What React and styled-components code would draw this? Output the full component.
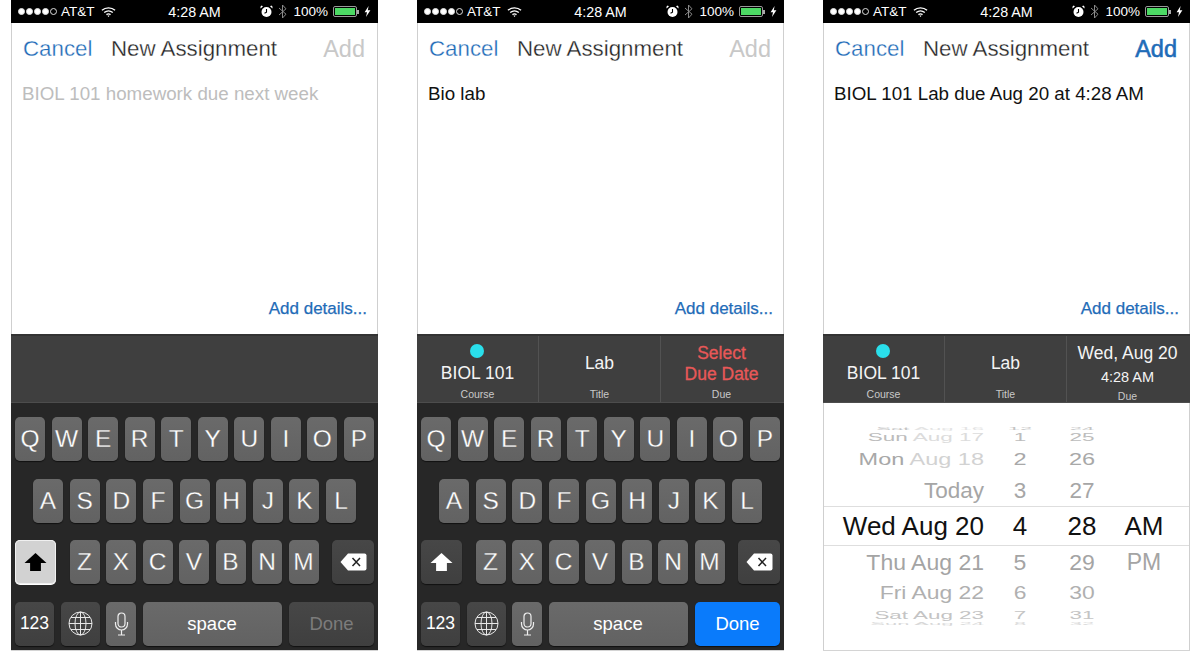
import React from 'react';
import styled, { createGlobalStyle } from 'styled-components';

const BLUE = '#1f6cb8';
const SANS = '"Liberation Sans", Arial, sans-serif';

const GlobalStyle = createGlobalStyle`
  html, body {
    margin: 0;
    background: #fff;
    font-family: ${SANS};
  }
`;

const Page = styled.div`
  display: flex;
  gap: 39px;
  padding-left: 11px;
  width: 1200px;
  height: 652px;
  box-sizing: border-box;
  overflow: hidden;
`;

const Phone = styled.div`
  width: 367px;
  height: 651px;
  display: flex;
  flex-direction: column;
  border-bottom: 1px solid #d4d4d4;
  box-sizing: border-box;
`;

const StatusBar = styled.div`
  height: 23px;
  flex: none;
  background: #000;
  color: #fff;
  display: grid;
  grid-template-columns: 1fr auto 1fr;
  align-items: center;
  padding: 0 7px;
  font-size: 13.5px;
`;

const StatusSide = styled.div`
  display: flex;
  align-items: center;
  justify-content: ${p => (p.$right ? 'flex-end' : 'flex-start')};
`;

const Time = styled.span`
  font-size: 14.3px;
`;

const Dots = styled.span`
  display: flex;
  gap: 1px;
  margin-right: 4px;
`;

const Dot = styled.i`
  width: 7px;
  height: 7px;
  box-sizing: border-box;
  border-radius: 50%;
  background: ${p => (p.$empty ? 'transparent' : '#fff')};
  border: 1px solid #ddd;
`;

const Carrier = styled.span`
  margin-right: 6px;
`;

const Percent = styled.span`
  margin: 0 5px 0 6px;
`;

const Battery = styled.span`
  width: 24px;
  height: 11px;
  border: 1px solid #999;
  border-radius: 2px;
  padding: 1px;
  box-sizing: border-box;
  position: relative;
  display: flex;
  margin-right: 7px;
  &::after {
    content: '';
    position: absolute;
    right: -3px;
    top: 2.5px;
    width: 2px;
    height: 4px;
    background: #aaa;
  }
`;

const BatteryFill = styled.span`
  flex: 1;
  background: #4cd964;
`;

const Sheet = styled.div`
  height: 311px;
  flex: none;
  box-sizing: border-box;
  background: #fff;
  border: solid #cfcfcf;
  border-width: 0 1px;
  display: flex;
  flex-direction: column;
`;

const Nav = styled.div`
  height: 52px;
  flex: none;
  display: flex;
  align-items: center;
  padding: 0 12px 0 11px;
  font-size: 22.3px;
  -webkit-text-stroke: 0.3px #fff;
`;

const Cancel = styled.span`
  color: ${BLUE};
  width: 88px;
`;

const Title = styled.span`
  color: #222;
  flex: 1;
`;

const AddButton = styled.span`
  font-size: 23.5px;
  color: ${p => (p.$ready ? BLUE : '#c8c8c8')};
  -webkit-text-stroke: ${p => (p.$ready ? `0.6px ${BLUE}` : '0')};
`;

const Message = styled.div`
  padding: 8px 10px 0;
  font-size: 18.75px;
  line-height: 22px;
  color: ${p => (p.$placeholder ? '#bdbdbd' : '#111')};
`;

const Details = styled.div`
  margin-top: auto;
  padding: 0 10px 15px 0;
  text-align: right;
  font-size: 17px;
  line-height: 20px;
  color: ${BLUE};
  -webkit-text-stroke: 0.25px ${BLUE};
`;

const Toolbar = styled.div`
  height: 69px;
  flex: none;
  box-sizing: border-box;
  background: #3f3f3f;
  border-top: 2px solid #333;
  border-bottom: 1px solid #4d4d4d;
  display: flex;
`;

const Cell = styled.div`
  flex: 1;
  min-width: 0;
  box-sizing: border-box;
  display: flex;
  flex-direction: column;
  align-items: center;
  color: #fff;
  border-right: 1px solid #525252;
  &:last-child {
    border-right: 0;
    padding-right: 2px;
  }
`;

const CellMain = styled.div`
  flex: 1;
  display: flex;
  flex-direction: column;
  align-items: center;
  justify-content: center;
  padding-top: ${p => p.$top || 0}px;
`;

const CourseDot = styled.span`
  width: 14px;
  height: 14px;
  border-radius: 50%;
  background: #2adfeb;
  margin-bottom: 5px;
`;

const CellValue = styled.span`
  font-size: ${p => p.$size || 17.5}px;
  line-height: ${p => p.$line || 21}px;
  text-align: center;
  color: ${p => (p.$alert ? '#e85858' : '#f4f4f4')};
  -webkit-text-stroke: ${p => (p.$alert ? '0.3px #e85858' : '0')};
`;

const CellLabel = styled.span`
  font-size: 10.5px;
  line-height: 12px;
  color: #c9c9c9;
  padding-bottom: 2px;
`;

const Keyboard = styled.div`
  flex: 1;
  background: #272727;
  padding: 14px 4px 4px;
  display: flex;
  flex-direction: column;
  justify-content: space-between;
`;

const KeyRow = styled.div`
  display: flex;
  justify-content: space-between;
  padding: 0 ${p => p.$inset || 0}px;
`;

const KeyGroup = styled.div`
  display: flex;
  gap: ${p => p.$gap || 6.5}px;
`;

const KEY_COLORS = {
  letter: 'linear-gradient(#6a6a6a, #626262)',
  dark: 'linear-gradient(#474747, #3f3f3f)',
  light: '#d2d2d2',
  blue: '#0a7bfb',
};

const Key = styled.div`
  width: ${p => p.$width || 30}px;
  height: 44px;
  flex: none;
  display: flex;
  align-items: center;
  justify-content: center;
  border-radius: 5px;
  background: ${p => KEY_COLORS[p.$tone || 'letter']};
  box-shadow: ${p => (p.$tone === 'light' ? '0 1px 0 #fff, inset 0 0 0 1px #f0f0f0' : '0 1px 1px #111')};
  color: ${p => p.$color || '#fff'};
  font-size: ${p => p.$size || 24.5}px;
  -webkit-text-stroke: ${p => (p.$size ? '0' : '0.3px #666')};
`;

const Picker = styled.div`
  flex: 1;
  background: #fff;
  border: solid #cfcfcf;
  border-width: 0 1px;
  padding-top: 24px;
`;

const WheelRow = styled.div`
  height: ${p => p.$height}px;
  line-height: ${p => p.$height}px;
  display: grid;
  grid-template-columns: 160px 72px 52px 72px;
  align-items: center;
  font-size: ${p => p.$size}px;
  color: ${p => p.$color};
  ${p => p.$selected && `
    border: solid #dedede;
    border-width: 1px 0;
    box-sizing: border-box;
    line-height: 38px;
  `}
`;

const WheelText = styled.span`
  display: block;
  white-space: nowrap;
  transform: scaleY(${p => p.$squash || 1});
  text-align: ${p => (p.$date ? 'right' : 'center')};
`;

const FadedPart = styled.span`
  color: ${p => p.$color};
`;

const Wifi = () => (
  <svg width="15" height="12" viewBox="0 0 16 12" fill="none" stroke="#fff" strokeWidth="1.4">
    <path d="M1 4.2C5 .6 11 .6 15 4.2" />
    <path d="M3.4 6.6c2.7-2.2 6.5-2.2 9.2 0" />
    <path d="M5.8 8.8c1.3-1 3.1-1 4.4 0" />
    <path d="M8 11.4 6.900 10.100c.7-.4 1.5-.4 2.2 0z" fill="#fff" stroke="none" />
  </svg>
);

const Alarm = () => (
  <svg width="13" height="13" viewBox="0 0 13 13" style={{ marginRight: 5 }}>
    <circle cx="6.5" cy="7" r="5" fill="#fff" />
    <path d="M6.5 4v3.2l-2 1" stroke="#000" strokeWidth="1.1" fill="none" />
    <path d="M.6 3.4 3 1.2 1.6.6.4 1.8zM12.4 3.4 10 1.2l1.4-.6 1.2 1.2z" fill="#fff" />
  </svg>
);

const Bluetooth = () => (
  <svg width="9" height="15" viewBox="0 0 9 15" fill="none" stroke="#8a8a8a" strokeWidth="1">
    <path d="M1 4l7 6.2-3.5 3.8V1L8 4.800 1 11" />
  </svg>
);

const Bolt = () => (
  <svg width="7" height="11" viewBox="0 0 7 11">
    <path d="M4.6 0 .6 6.2h2.4L2 11l4.400-6.8H3.8z" fill="#fff" />
  </svg>
);

const ShiftArrow = ({ color }) => (
  <svg width="23" height="20" viewBox="0 0 23 20">
    <path d="M11.5 1 22.5 11h-5.6v8H6.100V11H.5z" fill={color} />
  </svg>
);

const DeleteGlyph = () => (
  <svg width="27" height="18" viewBox="0 0 27 18">
    <path d="M8 .5h16.5a2 2 0 0 1 2 2v13a2 2 0 0 1-2 2H8L.5 9z" fill="#fff" />
    <path d="M12.5 5l7.500 8M20 5l-7.500 8" stroke="#222" strokeWidth="1.5" />
  </svg>
);

const GlobeGlyph = () => (
  <svg width="25" height="25" viewBox="0 0 25 25" fill="none" stroke="#e8e8e8" strokeWidth="1">
    <circle cx="12.5" cy="12.5" r="11.5" />
    <ellipse cx="12.5" cy="12.5" rx="5.5" ry="11.5" />
    <path d="M12.5 1v23M1 12.5h23M3 6.5h19M3 18.5h19" />
  </svg>
);

const MicGlyph = () => (
  <svg width="15" height="24" viewBox="0 0 15 24" fill="none" stroke="#eee" strokeWidth="1.2">
    <rect x="4" y="1" width="7" height="14" rx="3.5" />
    <path d="M1.5 10v2a6 6 0 0 0 12 0v-2M7.5 18v5M4 23h7" />
  </svg>
);

const ROW_ONE = 'QWERTYUIOP'.split('');
const ROW_TWO = 'ASDFGHJKL'.split('');
const ROW_THREE = 'ZXCVBNM'.split('');

const KeyboardPanel = ({ ready }) => (
  <Keyboard>
    <KeyRow>
      {ROW_ONE.map(letter => <Key key={letter}>{letter}</Key>)}
    </KeyRow>
    <KeyRow $inset={18}>
      {ROW_TWO.map(letter => <Key key={letter}>{letter}</Key>)}
    </KeyRow>
    <KeyRow>
      <Key $width={41} $tone={ready ? 'dark' : 'light'}>
        <ShiftArrow color={ready ? '#fff' : '#000'} />
      </Key>
      <KeyGroup>
        {ROW_THREE.map(letter => <Key key={letter}>{letter}</Key>)}
      </KeyGroup>
      <Key $width={42} $tone="dark"><DeleteGlyph /></Key>
    </KeyRow>
    <KeyRow>
      <KeyGroup>
        <Key $width={39} $tone="dark" $size={17.5}>123</Key>
        <Key $width={39} $tone="dark"><GlobeGlyph /></Key>
        <Key $width={30}><MicGlyph /></Key>
        <Key $width={139} $size={18.5}>space</Key>
      </KeyGroup>
      <Key $width={85} $tone={ready ? 'blue' : 'dark'} $size={18.5} $color={ready ? '#fff' : '#7c7c7c'}>
        Done
      </Key>
    </KeyRow>
  </Keyboard>
);

const CourseCell = () => (
  <Cell>
    <CellMain $top={3}>
      <CourseDot />
      <CellValue>BIOL 101</CellValue>
    </CellMain>
    <CellLabel>Course</CellLabel>
  </Cell>
);

const TitleCell = () => (
  <Cell>
    <CellMain $top={2}>
      <CellValue>Lab</CellValue>
    </CellMain>
    <CellLabel>Title</CellLabel>
  </Cell>
);

const WHEEL = [
  { height: 4, size: 22, squash: 0.2, color: '#c4c4c4', date: 'Sat', rest: 'Aug 16', restColor: '#e4e4e4', hour: '12', minute: '24' },
  { height: 12, size: 22.5, squash: 0.5, color: '#bcbcbc', date: 'Sun', rest: 'Aug 17', restColor: '#dcdcdc', hour: '1', minute: '25' },
  { height: 32, size: 23.5, squash: 0.74, color: '#a8a8a8', date: 'Mon', rest: 'Aug 18', restColor: '#d2d2d2', hour: '2', minute: '26' },
  { height: 31, size: 22.5, squash: 0.96, color: '#a6a6a6', date: 'Today', rest: '', hour: '3', minute: '27' },
  { height: 40, size: 26, color: '#111', date: 'Wed Aug 20', rest: '', hour: '4', minute: '28', meridiem: 'AM', selected: true },
  { height: 32, size: 23, squash: 0.98, color: '#a4a4a4', date: 'Thu Aug 21', rest: '', hour: '5', minute: '29', meridiem: 'PM' },
  { height: 30, size: 22.9, squash: 0.8, color: '#b0b0b0', date: 'Fri Aug 22', rest: '', hour: '6', minute: '30' },
  { height: 14, size: 22.4, squash: 0.5, color: '#c4c4c4', date: 'Sat Aug 23', rest: '', hour: '7', minute: '31' },
  { height: 4, size: 22, squash: 0.2, color: '#d8d8d8', date: 'Sun Aug 24', rest: '', hour: '8', minute: '32' },
];

const DatePicker = () => (
  <Picker>
    {WHEEL.map(row => (
      <WheelRow key={row.date + row.hour} $height={row.height} $size={row.size} $color={row.color} $selected={row.selected}>
        <WheelText $date $squash={row.squash}>
          {row.date}
          {row.rest && <FadedPart $color={row.restColor}> {row.rest}</FadedPart>}
        </WheelText>
        <WheelText $squash={row.squash}>{row.hour}</WheelText>
        <WheelText $squash={row.squash}>{row.minute}</WheelText>
        <WheelText>{row.meridiem}</WheelText>
      </WheelRow>
    ))}
  </Picker>
);

const Screen = ({ text, placeholder, ready, cells, children }) => (
  <Phone>
    <StatusBar>
      <StatusSide>
        <Dots>
          <Dot /><Dot /><Dot /><Dot /><Dot $empty />
        </Dots>
        <Carrier>AT&amp;T</Carrier>
        <Wifi />
      </StatusSide>
      <Time>4:28 AM</Time>
      <StatusSide $right>
        <Alarm />
        <Bluetooth />
        <Percent>100%</Percent>
        <Battery><BatteryFill /></Battery>
        <Bolt />
      </StatusSide>
    </StatusBar>
    <Sheet>
      <Nav>
        <Cancel>Cancel</Cancel>
        <Title>New Assignment</Title>
        <AddButton $ready={ready}>Add</AddButton>
      </Nav>
      <Message $placeholder={placeholder}>{text}</Message>
      <Details>Add details...</Details>
    </Sheet>
    <Toolbar>{cells}</Toolbar>
    {children}
  </Phone>
);

export default function App() {
  return (
    <>
      <GlobalStyle />
      <Page>
        <Screen placeholder text="BIOL 101 homework due next week">
          <KeyboardPanel />
        </Screen>
        <Screen
          text="Bio lab"
          cells={
            <>
              <CourseCell />
              <TitleCell />
              <Cell>
                <CellMain $top={3}>
                  <CellValue $alert>Select<br />Due Date</CellValue>
                </CellMain>
                <CellLabel>Due</CellLabel>
              </Cell>
            </>
          }
        >
          <KeyboardPanel ready />
        </Screen>
        <Screen
          ready
          text="BIOL 101 Lab due Aug 20 at 4:28 AM"
          cells={
            <>
              <CourseCell />
              <TitleCell />
              <Cell>
                <CellMain $top={6}>
                  <CellValue $size={17.5} $line={22}>Wed, Aug 20</CellValue>
                  <CellValue $size={14.5} $line={26}>4:28 AM</CellValue>
                </CellMain>
                <CellLabel>Due</CellLabel>
              </Cell>
            </>
          }
        >
          <DatePicker />
        </Screen>
      </Page>
    </>
  );
}
